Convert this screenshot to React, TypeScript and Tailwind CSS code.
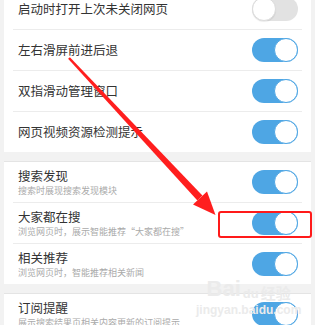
type Row = {
  title: string;
  desc?: string;
  on: boolean;
};

const sections: Row[][] = [
  [
    { title: "启动时打开上次未关闭网页", on: false },
    { title: "左右滑屏前进后退", on: true },
    { title: "双指滑动管理窗口", on: true },
    { title: "网页视频资源检测提示", on: true },
  ],
  [
    { title: "搜索发现", desc: "搜索时展现搜索发现模块", on: true },
    { title: "大家都在搜", desc: "浏览网页时，展示智能推荐“大家都在搜”", on: true },
    { title: "相关推荐", desc: "浏览网页时，智能推荐相关新闻", on: true },
  ],
  [{ title: "订阅提醒", desc: "展示搜索结果页相关内容更新的订阅提示", on: true }],
];

/** iOS 風のトグル */
function Toggle({ on }: { on: boolean }) {
  if (!on) {
    return (
      <div className="flex h-[24px] w-[46px] shrink-0 items-center rounded-full bg-[#e2e2e2]">
        <div className="h-[24px] w-[24px] rounded-full border border-[#dcdcdc] bg-white shadow-[0_1px_1px_rgba(0,0,0,0.08)]" />
      </div>
    );
  }
  return (
    <div className="flex h-[24px] w-[46px] shrink-0 items-center justify-end rounded-full bg-[#4ea6e4]">
      <div className="h-[24px] w-[24px] rounded-full border border-[#4ea6e4] bg-white" />
    </div>
  );
}

function SettingRow({ row }: { row: Row }) {
  return (
    <div className="flex h-[40px] items-center justify-between pl-[14px] pr-[13px]">
      <div className="flex flex-col">
        <span className="text-[12.5px] leading-[16px] text-[#333333]">{row.title}</span>
        {row.desc && (
          <span className="text-[9px] leading-[13px] text-[#aaaaaa]">{row.desc}</span>
        )}
      </div>
      <Toggle on={row.on} />
    </div>
  );
}

function Section({ rows }: { rows: Row[] }) {
  return (
    <section className="mx-[4px] border-t border-[#e4e4e4] bg-white">
      {rows.map((row, i) => (
        <div key={row.title}>
          <SettingRow row={row} />
          {i < rows.length - 1 && <div className="mx-[9px] h-px bg-[#ececec]" />}
        </div>
      ))}
    </section>
  );
}

export default function App() {
  return (
    <div className="relative h-[325px] w-[315px] overflow-hidden bg-[#f2f2f2] font-['Noto_Sans_CJK_SC',sans-serif]">
      <div className="-mt-[12px] flex flex-col gap-[9px]">
        {sections.map((rows) => (
          <Section key={rows[0].title} rows={rows} />
        ))}
      </div>

      {/* 透かし */}
      <div className="pointer-events-none absolute left-[196px] top-[278px] flex flex-col items-center leading-none text-[#ebebeb]">
        <div className="flex items-end gap-[2px] font-['Liberation_Sans',sans-serif] text-[22px] font-bold">
          <span>Bai</span>
          <span className="text-[13px]">du</span>
          <span className="font-['Noto_Sans_CJK_SC',sans-serif] text-[15px]">经验</span>
        </div>
        <span className="mt-[4px] font-['Liberation_Sans',sans-serif] text-[12px] font-bold">
          jingyan.baidu.com
        </span>
      </div>

      {/* 赤い矢印 */}
      <svg className="pointer-events-none absolute left-0 top-0" width="315" height="325" viewBox="0 0 315 325">
        <polygon points="68.1,58.8 69.9,57.2 202.4,195.6 197.4,200.4" fill="#ff1e1e" />
        <polygon points="193,204.5 207,191.5 215.5,215" fill="#ff1e1e" />
      </svg>

      {/* 赤い枠 */}
      <div className="pointer-events-none absolute left-[218px] top-[211px] h-[27px] w-[94px] rounded-[3px] border-2 border-[#ff1a1a]" />
    </div>
  );
}
